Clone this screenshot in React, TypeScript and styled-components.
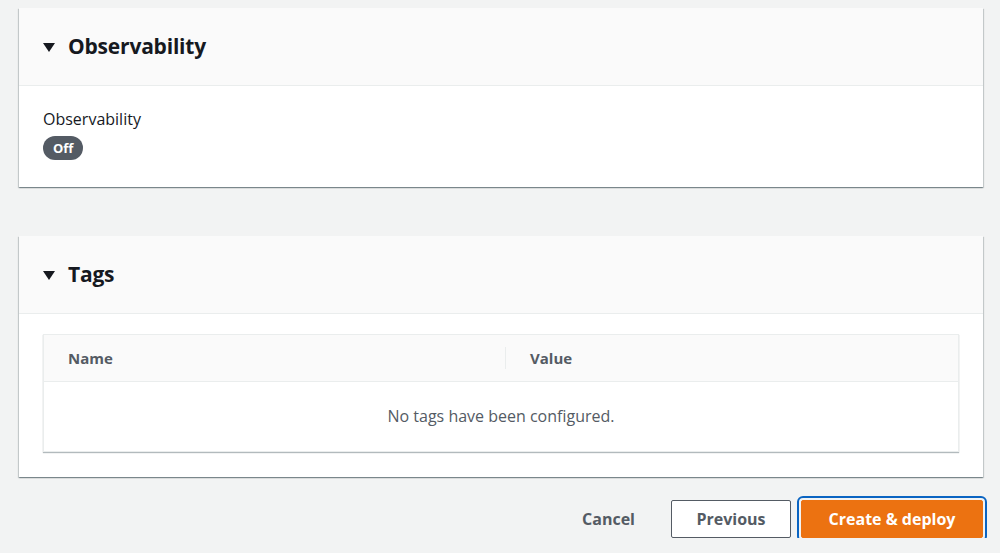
import * as React from 'react';
import styled, { createGlobalStyle } from 'styled-components';

const GlobalStyle = createGlobalStyle`
  html, body {
    margin: 0;
    padding: 0;
    background: #f2f3f3;
    font-family: "Open Sans", "Liberation Sans", sans-serif;
    color: #16191f;
  }
`;

const Page = styled.div`
  padding: 8px 17px 0 19px;
  display: flex;
  flex-direction: column;
`;

const Card = styled.section<{ gap?: number }>`
  background: #ffffff;
  box-shadow: 0 1px 1px 0 rgba(0, 28, 36, 0.3), 1px 1px 1px 0 rgba(0, 28, 36, 0.15),
    -1px 1px 1px 0 rgba(0, 28, 36, 0.15);
  margin-bottom: ${p => p.gap ?? 0}px;
`;

const CardHeader = styled.header`
  height: 78px;
  box-sizing: border-box;
  background: #fafafa;
  border-bottom: 1px solid #eaeded;
  display: flex;
  align-items: center;
  padding: 0 24px;
  gap: 13px;
`;

const Caret = styled.span`
  width: 0;
  height: 0;
  border-left: 6px solid transparent;
  border-right: 6px solid transparent;
  border-top: 9px solid #16191f;
  margin-top: 1px;
`;

const Title = styled.h2`
  margin: 0;
  font-size: 21px;
  font-weight: 700;
  letter-spacing: -0.2px;
  margin-top: -2px;
`;

const CardBody = styled.div<{ pt: number; pb: number }>`
  padding: ${p => p.pt}px 24px ${p => p.pb}px;
`;

const Label = styled.div`
  font-size: 16px;
  line-height: 20px;
  color: #16191f;
  margin-bottom: 7px;
`;

const Badge = styled.div`
  display: flex;
  width: fit-content;
  align-items: center;
  justify-content: center;
  height: 24px;
  padding: 0 10px;
  border-radius: 12px;
  background: #545b64;
  color: #ffffff;
  font-size: 13px;
  font-weight: 700;
`;

const Table = styled.div`
  border: 1px solid #eaeded;
  box-shadow: 0 1px 1px 0 rgba(0, 28, 36, 0.3);
`;

const TableHead = styled.div`
  display: grid;
  grid-template-columns: 461px 1fr;
  height: 46px;
  align-items: center;
  background: #fafafa;
  border-bottom: 1px solid #eaeded;
`;

const HeadCell = styled.div<{ divider?: boolean }>`
  font-size: 15px;
  font-weight: 700;
  color: #545b64;
  padding-left: 24px;
  border-left: ${p => (p.divider ? '1px solid #eaeded' : 'none')};
  line-height: 22px;
`;

const Empty = styled.div`
  height: 69px;
  display: flex;
  align-items: center;
  justify-content: center;
  font-size: 16px;
  color: #545b64;
  padding-bottom: 2px;
  box-sizing: border-box;
`;

const Actions = styled.div`
  display: flex;
  justify-content: flex-end;
  align-items: center;
  padding-top: 23px;
  gap: 10px;
`;

const LinkButton = styled.button`
  background: none;
  border: none;
  font-family: inherit;
  font-size: 16px;
  font-weight: 700;
  color: #545b64;
  padding: 0 20px;
  height: 38px;
  margin-right: 6px;
`;

const Button = styled.button<{ primary?: boolean }>`
  font-family: inherit;
  font-size: 16px;
  font-weight: 700;
  height: 38px;
  box-sizing: border-box;
  border-radius: 2px;
  padding: 0 10px;
  width: ${p => (p.primary ? 182 : 120)}px;
  color: ${p => (p.primary ? '#ffffff' : '#545b64')};
  background: ${p => (p.primary ? '#ec7211' : '#ffffff')};
  border: 1px solid ${p => (p.primary ? '#ec7211' : '#545b64')};
  outline: ${p => (p.primary ? '2px solid #0a64c2' : 'none')};
  outline-offset: 2px;
`;

export default function App() {
  return (
    <>
      <GlobalStyle />
      <Page>
        <Card gap={49}>
          <CardHeader>
            <Caret />
            <Title>Observability</Title>
          </CardHeader>
          <CardBody pt={23} pb={27}>
            <Label>Observability</Label>
            <Badge>Off</Badge>
          </CardBody>
        </Card>
        <Card>
          <CardHeader>
            <Caret />
            <Title>Tags</Title>
          </CardHeader>
          <CardBody pt={20} pb={25}>
            <Table>
              <TableHead>
                <HeadCell>Name</HeadCell>
                <HeadCell divider>Value</HeadCell>
              </TableHead>
              <Empty>No tags have been configured.</Empty>
            </Table>
          </CardBody>
        </Card>
        <Actions>
          <LinkButton>Cancel</LinkButton>
          <Button>Previous</Button>
          <Button primary>Create &amp; deploy</Button>
        </Actions>
      </Page>
    </>
  );
}
